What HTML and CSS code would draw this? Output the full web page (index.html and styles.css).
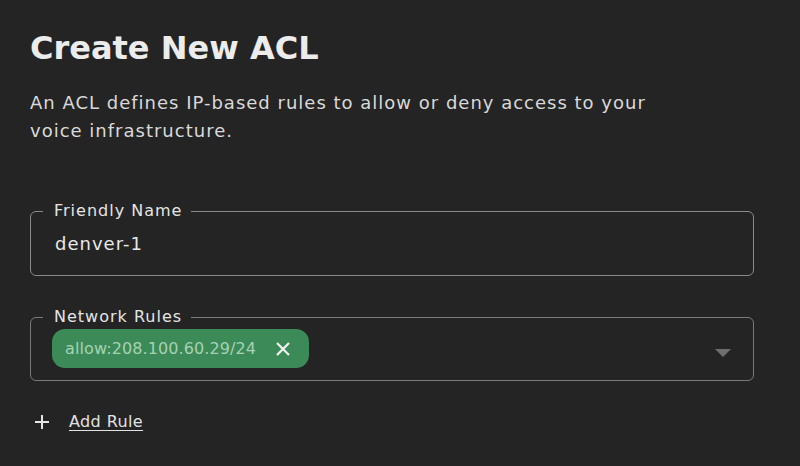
FILE: index.html
```html
<!DOCTYPE html>
<html lang="en">
<head>
<meta charset="utf-8">
<title>Create New ACL</title>
<link rel="stylesheet" href="styles.css">
</head>
<body>
<main class="page">
  <h1 class="title">Create New ACL</h1>
  <p class="intro">An ACL defines IP-based rules to allow or deny access to your<br>voice infrastructure.</p>

  <fieldset class="field">
    <legend class="field-label">Friendly Name</legend>
    <div class="field-value">denver-1</div>
  </fieldset>

  <fieldset class="field field-select">
    <legend class="field-label">Network Rules</legend>
    <div class="select-row">
      <span class="chip">
        <span class="chip-text">allow:208.100.60.29/24</span>
        <svg class="chip-x" width="16" height="16" viewBox="0 0 16 16" aria-hidden="true">
          <path d="M2 2 L14 14 M14 2 L2 14" stroke="#f2f2f2" stroke-width="2.2" stroke-linecap="butt" fill="none"/>
        </svg>
      </span>
      <svg class="caret" width="16" height="8" viewBox="0 0 16 8" aria-hidden="true">
        <path d="M0 0 L16 0 L8 8 Z" fill="#6e6e6e"/>
      </svg>
    </div>
  </fieldset>

  <div class="add-rule">
    <svg class="plus" width="16" height="16" viewBox="0 0 16 16" aria-hidden="true">
      <path d="M8 1 V15 M1 8 H15" stroke="#e6e6e6" stroke-width="2" fill="none"/>
    </svg>
    <a class="add-link" href="#">Add Rule</a>
  </div>
</main>
</body>
</html>
```

FILE: styles.css
```css
html, body {
  margin: 0;
  padding: 0;
  background: #242424;
}

body {
  width: 800px;
  height: 466px;
  overflow: hidden;
  font-family: "DejaVu Sans", "Open Sans", sans-serif;
  color: #e6e6e6;
}

.page {
  padding: 26px 46px 0 30px;
}

.title {
  margin: 0;
  font-size: 32px;
  line-height: 44px;
  font-weight: 600;
  color: #ececec;
}

.intro {
  margin: 19px 0 0;
  font-size: 18px;
  line-height: 28px;
  color: #d9d9d9;
  letter-spacing: 1px;
}

.field {
  margin: 56px 0 0;
  padding: 0 24px 0 24px;
  border: 1.5px solid #8a8a8a;
  border-radius: 6px;
  min-width: 0;
}

.field-label {
  margin-left: -12px;
  padding: 0 9px 0 11px;
  font-size: 16px;
  line-height: 20px;
  font-weight: 500;
  color: #e4e4e4;
  letter-spacing: 1px;
}

.field-value {
  height: 54px;
  display: flex;
  align-items: center;
  padding-bottom: 9px;
  box-sizing: border-box;
  font-size: 18px;
  color: #e8e8e8;
  letter-spacing: 1px;
}

.field-select {
  margin-top: 31px;
  padding: 0 22px 0 21px;
  border-color: #7a7a7a;
}

.field-select .field-label {
  margin-left: -9px;
}

.select-row {
  height: 53px;
  display: flex;
  align-items: center;
  justify-content: space-between;
  padding-bottom: 10px;
  box-sizing: border-box;
}

.chip {
  display: inline-flex;
  align-items: center;
  height: 39px;
  padding: 0 18px 0 13px;
  border-radius: 13px;
  background: #3c8a58;
  gap: 19px;
}

.chip-text {
  font-size: 16px;
  color: #a6d2b3;
  letter-spacing: 0.1px;
}

.chip-x {
  display: block;
}

.caret {
  display: block;
  margin-top: 9px;
}

.add-rule {
  display: flex;
  align-items: center;
  gap: 19px;
  margin-top: 31px;
  padding-left: 4px;
}

.plus {
  display: block;
}

.add-link {
  font-size: 16px;
  color: #e2e2e2;
  text-decoration: underline;
  text-underline-offset: 3px;
  letter-spacing: 0.4px;
}
```
